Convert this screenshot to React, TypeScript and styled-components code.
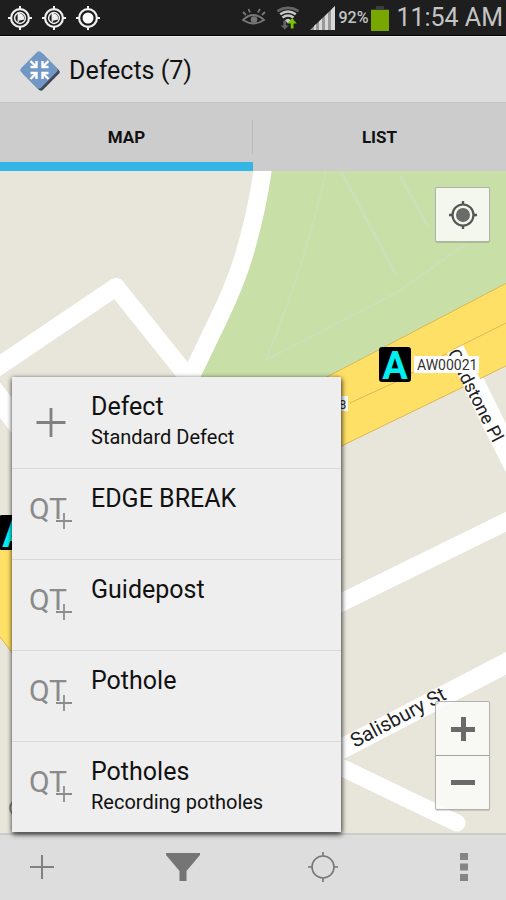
import React from "react";
import styled, { createGlobalStyle } from "styled-components";

const GlobalStyle = createGlobalStyle`
  * { box-sizing: border-box; }
  body { margin: 0; font-family: Roboto, "Liberation Sans", sans-serif; background: #dddddd; color: #111; }
  button { font: inherit; color: inherit; border: 0; padding: 0; margin: 0; cursor: pointer; }
  svg { display: block; flex: none; }
`;

const Screen = styled.div`
  display: flex;
  flex-direction: column;
  min-height: 100vh;
`;

const StatusBar = styled.div`
  display: flex;
  align-items: center;
  justify-content: space-between;
  height: 36px;
  padding: 0 3px 0 8px;
  background: #1e1e1e;
  border-bottom: 1px solid #000;
  color: #c4c4c4;
`;

const StatusGroup = styled.div<{ $gap: number }>`
  display: flex;
  align-items: center;
  gap: ${(p) => p.$gap}px;
`;

const Percent = styled.span`
  font-size: 16px;
  font-weight: 500;
  line-height: 36px;
`;

const Clock = styled.span`
  font-size: 25px;
  line-height: 36px;
  margin-left: 4px;
`;

const Header = styled.header`
  display: flex;
  align-items: center;
  gap: 7px;
  height: 66px;
  padding: 2px 18px 0;
  background: #dddddd;
  border-top: 1px solid #f0f0f0;
`;

const Title = styled.h1`
  margin: 0;
  font-size: 25px;
  font-weight: 400;
  line-height: 32px;
`;

const Tabs = styled.div`
  display: flex;
  height: 69px;
  background: #cccccc;
  border-top: 1px solid #c4c4c4;
`;

const Tab = styled.button<{ $active?: boolean }>`
  flex: 1;
  padding-top: 9px;
  background: transparent;
  border-bottom: 9px solid ${(p) => (p.$active ? "#33b5e5" : "transparent")};
  font-size: 17px;
  font-weight: 700;
`;

const TabDivider = styled.div`
  width: 1px;
  height: 34px;
  margin: 17px 0 0 -1px;
  background: #b8b8b8;
`;

const MapArea = styled.main`
  position: relative;
  display: flex;
  flex: 1;
  min-height: 500px;
`;

const MapDrawing = styled.svg`
  position: absolute;
  inset: 0;
  width: 100%;
  height: 100%;
`;

const Menu = styled.div`
  position: absolute;
  left: 12px;
  bottom: 1px;
  width: 329px;
  background: #eeeeee;
  box-shadow: 0 1px 5px rgba(0, 0, 0, 0.6), 1px 3px 5px rgba(0, 0, 0, 0.45);
`;

const MenuRow = styled.button`
  display: flex;
  align-items: flex-start;
  gap: 15px;
  width: 100%;
  height: 91px;
  padding: 14px 12px 0 16px;
  background: transparent;
  text-align: left;

  & + & {
    border-top: 1px solid #d9d9d9;
  }
`;

const RowTexts = styled.span`
  display: flex;
  flex-direction: column;
`;

const RowTitle = styled.span`
  font-size: 25px;
  line-height: 32px;
`;

const RowNote = styled.span`
  font-size: 20px;
  line-height: 28px;
`;

const MapButton = styled.button`
  display: flex;
  align-items: center;
  justify-content: center;
  width: 53px;
  height: 53px;
  background: transparent;
`;

const MapControls = styled.div<{ $place: "top" | "bottom" }>`
  position: absolute;
  right: 16px;
  ${(p) => (p.$place === "top" ? "top: 16px;" : "bottom: 23px;")}
  background: rgba(250, 250, 248, 0.86);
  border: 1px solid rgba(90, 90, 90, 0.45);
  border-radius: 2px;
  box-shadow: 0 1px 1px rgba(0, 0, 0, 0.15);

  ${MapButton} + ${MapButton} {
    height: 54px;
    border-top: 1px solid #a5a5a1;
  }
`;

const ActionBar = styled.footer`
  display: flex;
  align-items: center;
  justify-content: space-between;
  height: 67px;
  padding: 0 18px 2px;
  background: #dddddd;
  border-top: 2px solid #cccccc;
`;

const ActionButton = styled.button`
  display: flex;
  align-items: center;
  justify-content: center;
  width: 48px;
  height: 48px;
  background: transparent;
`;

const TargetIcon = ({ pointer }: { pointer?: boolean }) => (
  <svg width="24" height="24" viewBox="0 0 24 24" fill="none" stroke="#f0f0f0">
    <circle cx="12" cy="12" r="8.9" strokeWidth="2.2" />
    <path d="M12 0v3M12 21v3M0 12h3M21 12h3" strokeWidth="2" />
    {pointer ? (
      <>
        <circle cx="12" cy="12" r="5.4" strokeWidth="1.5" />
        <path d="M10.200 7v9M10.500 7.500q5.500 1 5 5.500l-4 1z" fill="#f0f0f0" strokeWidth="1.200" />
      </>
    ) : (
      <circle cx="12" cy="12" r="5.5" fill="#fff" stroke="none" />
    )}
  </svg>
);

const EyeIcon = () => (
  <svg width="24" height="22" viewBox="0 0 24 22" fill="none" stroke="#777" strokeWidth="1.8">
    <path d="M1 13Q11 3 22 13Q12 20 1 13Z" />
    <circle cx="12" cy="12.5" r="3.3" fill="#777" stroke="none" />
    <path d="M4 8L1 5M8 5.500L6.500 2M16 5.500L18 2M20 8L23 5" />
  </svg>
);

const WifiIcon = () => (
  <svg width="24" height="26" viewBox="0 0 26 26" fill="none">
    <path d="M1.500 5.500Q13-1.500 24.500 5.500" stroke="#666" strokeWidth="2.800" />
    <path d="M4.500 9Q13 3 21.500 9M7 12.500Q13 8 19 12.500" stroke="#c8c8c8" strokeWidth="2.600" />
    <path d="M9.500 15.500Q13 12 16.500 15.500L13 19z" fill="#c8c8c8" />
    <path d="M8 16h3v5h3l-4.500 4.500L5 21h3z" fill="#666" />
    <path d="M16 24.500v-5.500h-3.500L17.500 13l5 6H19v5.500z" fill="#78c400" />
  </svg>
);

const SignalIcon = () => (
  <svg width="25" height="24" viewBox="0 0 25 24">
    <path d="M0 24L25 0V24Z" fill="#999" />
    <path d="M4 20l2-2v6H4zM9 15.500l3-3V24H9zM15 10l3-3v17h-3zM21 4l4-4v24h-4z" fill="#d8d8d8" />
  </svg>
);

const BatteryIcon = () => (
  <svg width="18" height="26" viewBox="0 0 18 26">
    <path d="M5 1h8v3h5v4H0V4h5z" fill="#3c3c3c" />
    <path d="M0 5h18v21H0z" fill="#78a800" />
  </svg>
);

const DefectIcon = () => (
  <svg width="44" height="44" viewBox="0 0 44 44">
    <rect x="9" y="9" width="28" height="28" rx="3" transform="rotate(45 23 23)" fill="#424854" />
    <rect x="7" y="7" width="28" height="28" rx="3" transform="rotate(45 21 21)" fill="#7197c6" />
    <g fill="none" stroke="#fff" strokeWidth="2.400">
      <path d="M12.500 12l5 5M30.500 12l-5 5M12.500 30l5-5M30.500 30l-5-5" />
      <path d="M18.500 12v6h-6M24.500 12v6h6M18.500 30v-6h-6M24.500 30v-6h6" />
    </g>
  </svg>
);

const PlusIcon = ({ size, weight = 2 }: { size: number; weight?: number }) => (
  <svg width={size} height={size} viewBox="0 0 24 24" fill="none" stroke="#808080" strokeWidth={weight}>
    <path d="M12 0v24M0 12h24" />
  </svg>
);

const AddGlyph = () => (
  <svg width="48" height="64" viewBox="0 0 48 64" fill="none" stroke="#808080" strokeWidth="2.800">
    <path d="M23 17v29M8.500 31.500h29" />
  </svg>
);

const QuickTemplateGlyph = () => (
  <svg width="48" height="64" viewBox="0 0 48 64">
    <text x="1" y="36" fontFamily="Roboto, sans-serif" fontSize="30" fontWeight="400" fill="#8a8a8a">
      QT
    </text>
    <path d="M36 30v16M28 38h16" fill="none" stroke="#eeeeee" strokeWidth="4" />
    <path d="M36 30v16M28 38h16" fill="none" stroke="#8c8c8c" strokeWidth="1.800" />
  </svg>
);

const LocateIcon = () => (
  <svg width="28" height="28" viewBox="0 0 28 28" fill="none" stroke="#555">
    <circle cx="14" cy="14" r="10.500" strokeWidth="2.200" />
    <path d="M14 0v4M14 24v4M0 14h4M24 14h4" strokeWidth="2.400" />
    <circle cx="14" cy="14" r="7" fill="#6b6b6b" stroke="none" />
  </svg>
);

const Marker = ({ x, y }: { x: number; y: number }) => (
  <g>
    <rect x={x} y={y} width="32" height="35" rx="3" fill="#000" />
    <text x={x + 16} y={y + 32} textAnchor="middle" fontSize="38" fontWeight="700" fill="#00f0f0">
      A
    </text>
  </g>
);

const StreetMap = () => (
  <MapDrawing
    viewBox="0 171 506 662"
    preserveAspectRatio="xMidYMid slice"
    fontFamily="Roboto, sans-serif"
    role="img"
    aria-label="Street map"
  >
    <rect x="-500" y="-300" width="1600" height="1700" fill="#e8e5db" />
    <path d="M263 160H700V186L320 390H185L218 320Q246 250 263 160Z" fill="#c8dfa8" />
    <g fill="none" stroke="#cddfb6" strokeWidth="2">
      <path d="M326 171Q306 262 266 360L396 293L466 244" />
      <path d="M341 171L396 275" strokeWidth="3" />
      <path d="M400 176L428 226" strokeWidth="3" />
    </g>
    <g fill="none" stroke="#fff" strokeWidth="18">
      <path d="M264 160Q259 203 245 252Q236 283 218 320L192 374" />
      <path d="M-20 379L116 287L192 382" strokeLinejoin="round" />
      <path d="M-20 375L40 451" strokeWidth="22" />
      <path d="M320 613L526 512" />
      <path d="M320 760L526 653" strokeWidth="20" />
      <path d="M320 757L457 823" strokeWidth="17" strokeLinecap="round" />
      <path d="M466 368L530 496" strokeWidth="22" />
    </g>
    <path d="M300 391L526 273V356L457 390L300 466Z" fill="#ffe066" stroke="#dcb855" />
    <path d="M350 403L400 380L458 347L526 313" fill="none" stroke="#dcb855" />
    <path d="M-20 528H30V676L0 637L-20 612Z" fill="#ffe066" stroke="#dcb855" />
    <path d="M455 349L480 399" stroke="#fff" strokeWidth="18" />
    <text transform="translate(447 353) rotate(63)" fontSize="18" fill="#222">
      Gladstone Pl
    </text>
    <text transform="translate(355 748) rotate(-28)" fontSize="20" fill="#222">
      Salisbury St
    </text>
    <rect x="280" y="396" width="68" height="15" fill="#fff" />
    <text x="339" y="409" fontSize="13" fill="#333">
      8
    </text>
    <rect x="414" y="356" width="65" height="17" fill="#fff" />
    <text x="417" y="370" fontSize="14" fill="#333">
      AW00021
    </text>
    <Marker x={379} y={347} />
    <Marker x={-1} y={515} />
    <circle cx="18" cy="808" r="8" fill="none" stroke="#888" strokeWidth="2" />
  </MapDrawing>
);

const items = [
  { title: "Defect", note: "Standard Defect", quick: false },
  { title: "EDGE BREAK", quick: true },
  { title: "Guidepost", quick: true },
  { title: "Pothole", quick: true },
  { title: "Potholes", note: "Recording potholes", quick: true },
];

export default function App() {
  return (
    <>
      <GlobalStyle />
      <Screen>
        <StatusBar>
          <StatusGroup $gap={10}>
            <TargetIcon pointer />
            <TargetIcon pointer />
            <TargetIcon />
          </StatusGroup>
          <StatusGroup $gap={3}>
            <StatusGroup $gap={10}>
              <EyeIcon />
              <WifiIcon />
              <SignalIcon />
            </StatusGroup>
            <Percent>92%</Percent>
            <BatteryIcon />
            <Clock>11:54 AM</Clock>
          </StatusGroup>
        </StatusBar>
        <Header>
          <DefectIcon />
          <Title>Defects (7)</Title>
        </Header>
        <Tabs role="tablist">
          <Tab role="tab" aria-selected="true" $active>
            MAP
          </Tab>
          <TabDivider />
          <Tab role="tab" aria-selected="false">
            LIST
          </Tab>
        </Tabs>
        <MapArea>
          <StreetMap />
          <MapControls $place="top">
            <MapButton aria-label="My location">
              <LocateIcon />
            </MapButton>
          </MapControls>
          <MapControls $place="bottom">
            <MapButton aria-label="Zoom in">
              <svg width="24" height="24" viewBox="0 0 24 24" fill="#6a6a6a">
                <path d="M0 10h10V0h5v10h9v5h-9v9h-5v-9H0z" />
              </svg>
            </MapButton>
            <MapButton aria-label="Zoom out">
              <svg width="24" height="24" viewBox="0 0 24 24" fill="#6a6a6a">
                <path d="M0 9h24v5H0z" />
              </svg>
            </MapButton>
          </MapControls>
          <Menu role="menu">
            {items.map((item) => (
              <MenuRow role="menuitem" key={item.title}>
                {item.quick ? <QuickTemplateGlyph /> : <AddGlyph />}
                <RowTexts>
                  <RowTitle>{item.title}</RowTitle>
                  {item.note && <RowNote>{item.note}</RowNote>}
                </RowTexts>
              </MenuRow>
            ))}
          </Menu>
        </MapArea>
        <ActionBar>
          <ActionButton aria-label="Add">
            <PlusIcon size={24} />
          </ActionButton>
          <ActionButton aria-label="Filter">
            <svg width="34" height="28" viewBox="0 0 34 28" fill="#757575">
              <path d="M0 0H34V2L20.500 18V28H13.500V18L0 2Z" />
            </svg>
          </ActionButton>
          <ActionButton aria-label="Locate">
            <svg width="30" height="30" viewBox="0 0 30 30" fill="none" stroke="#777" strokeWidth="1.600">
              <circle cx="15" cy="15" r="11" />
              <path d="M15 0v4M15 26v4M0 15h4M26 15h4" />
            </svg>
          </ActionButton>
          <ActionButton aria-label="More options">
            <svg width="8" height="28" viewBox="0 0 8 28" fill="#858585">
              <path d="M0 0h8v7H0zM0 10.500h8v7H0zM0 21h8v7H0z" />
            </svg>
          </ActionButton>
        </ActionBar>
      </Screen>
    </>
  );
}
